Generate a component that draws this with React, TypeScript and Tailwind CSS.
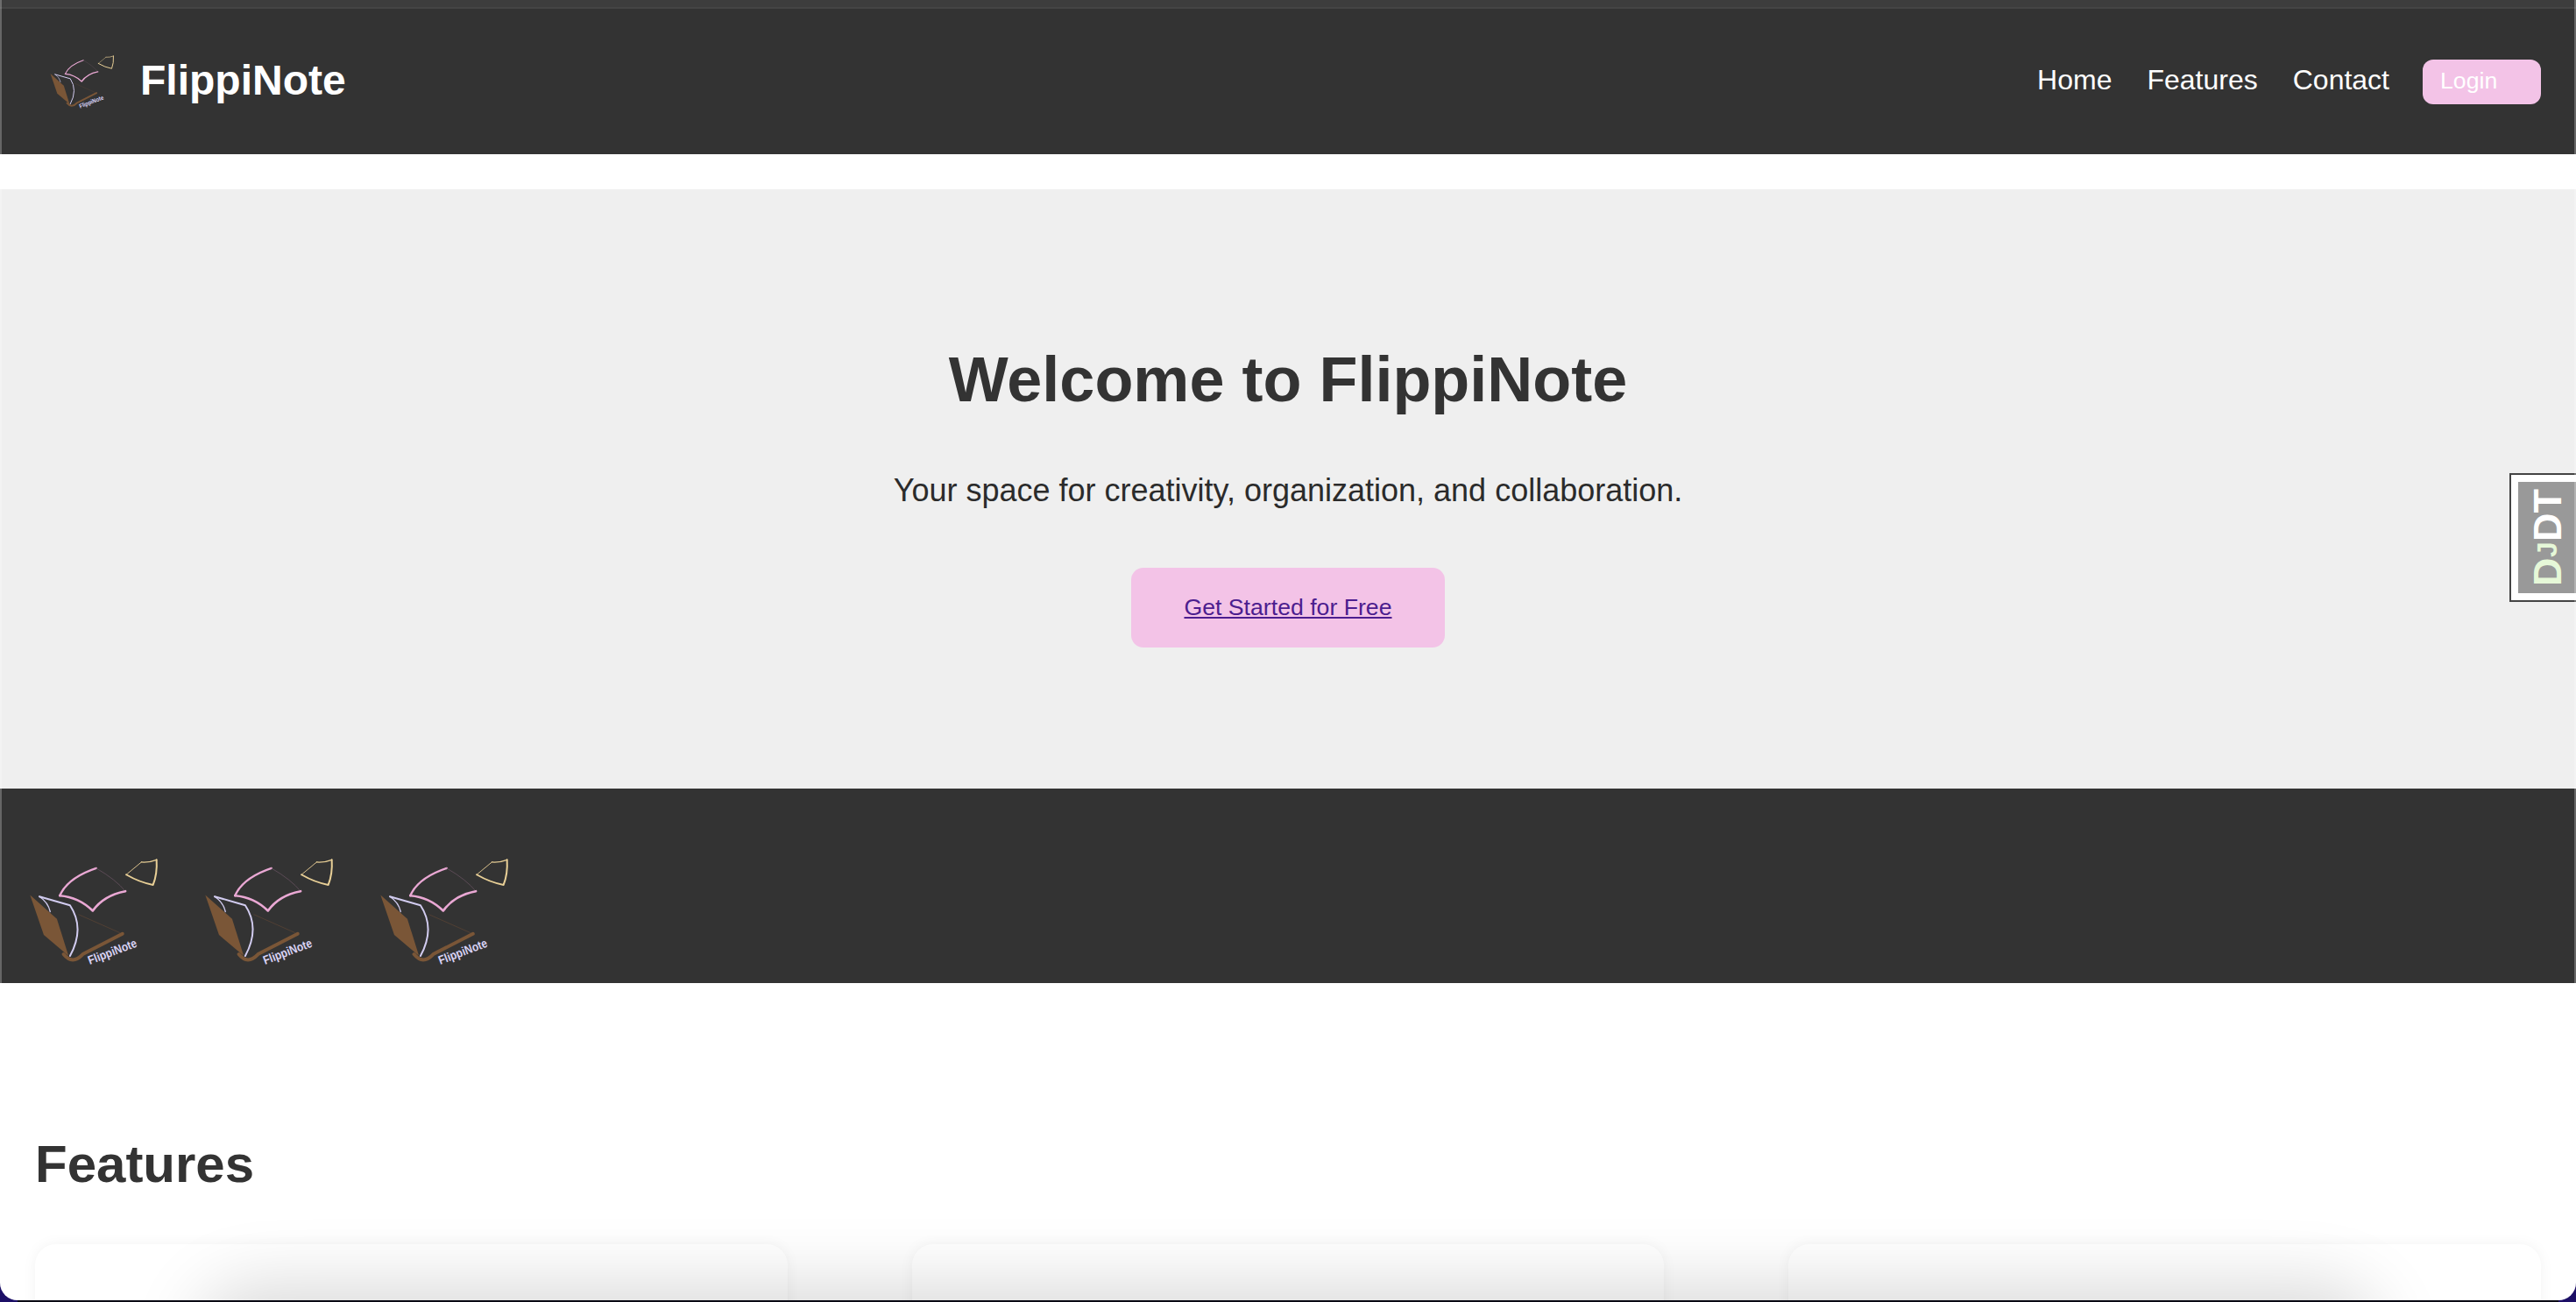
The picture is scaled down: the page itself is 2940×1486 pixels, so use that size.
import React from "react";

function Logo({ className }: { className: string }) {
  return (
    <svg viewBox="90 50 460 380" className={className} fill="none" strokeLinecap="round" strokeLinejoin="round">
      {/* book */}
      <path d="M103 183 L195 265 L235 392 L150 320 Z" fill="#7a5637" />
      <path d="M218 386 Q248 424 284 386 L420 316" stroke="#7a5637" strokeWidth="12" />
      <path d="M270 250 L410 312" stroke="#5f4634" strokeWidth="2" />
      {/* page */}
      <path d="M135 188 L240 218 Q292 296 240 392" stroke="#d2ccf0" strokeWidth="6" />
      <path d="M135 188 Q165 208 172 240" stroke="#d2ccf0" strokeWidth="4" />
      {/* pink sheet */}
      <path d="M205 185 Q232 124 330 91" stroke="#eaa8d4" strokeWidth="7" />
      <path d="M330 91 Q398 130 430 170" stroke="#6e5666" strokeWidth="2" />
      <path d="M430 170 Q356 184 318 237 Q270 190 205 185" stroke="#eaa8d4" strokeWidth="8" />
      {/* small sheet */}
      <path d="M433 113 L485 70" stroke="#d9c08c" strokeWidth="3" />
      <path d="M485 70 Q512 72 537 62" stroke="#e8cf96" strokeWidth="4" />
      <path d="M537 62 Q540 110 525 148 Q480 140 433 113" stroke="#e8cf96" strokeWidth="6" />
      <text
        x="308"
        y="422"
        transform="rotate(-21 308 422)"
        fontFamily="'Liberation Sans', sans-serif"
        fontSize="42"
        fontWeight="700"
        fill="#d8d2f4"
        textLength="176"
        lengthAdjust="spacingAndGlyphs"
      >
        FlippiNote
      </text>
    </svg>
  );
}

function App() {
  return (
    <div className="relative h-[1486px] overflow-hidden bg-[#1c0f66] font-['Liberation_Sans',Arial,sans-serif] text-[#333333]">
      <div className="relative h-[1484px] overflow-hidden rounded-b-[20px] bg-white">
        <nav className="flex h-[176px] items-center justify-between border-t-[10px] border-[#454545] bg-[#333333] pl-[55px] pr-[40px] text-white">
          <div className="flex items-center gap-[28px]">
            <Logo className="h-[63px] w-[77px]" />
            <span className="-mt-[3px] text-[48px] leading-[56px] font-bold">FlippiNote</span>
          </div>
          <div className="flex items-center gap-[40px] text-[32px] leading-[38px]">
            <a className="-mt-[4px]">Home</a>
            <a className="-mt-[4px]">Features</a>
            <a className="-mt-[4px]">Contact</a>
            <button className="-ml-[2px] h-[51px] w-[135px] rounded-[12px] bg-[#f3c3e7] pb-[2px] pl-[20px] text-left text-[26.67px] text-white">
              Login
            </button>
          </div>
        </nav>

        <section className="mt-[40px] flex h-[684px] flex-col items-center bg-[#efefef] pt-[175px]">
          <h1 className="text-[72px] leading-[84px] font-bold">Welcome to FlippiNote</h1>
          <p className="mt-[64px] text-[36px] leading-[42px] text-[#2b2b2b]">
            Your space for creativity, organization, and collaboration.
          </p>
          <a className="mt-[67px] flex h-[91px] w-[358px] items-center justify-center rounded-[14px] bg-[#f3c3e7] pb-[2px] text-[26.67px] text-[#4c1d8f] underline">
            Get Started for Free
          </a>
        </section>

        <section className="flex h-[222px] items-start gap-[47px] bg-[#333333] pl-[30px] pt-[77px]">
          <Logo className="h-[127px] w-[153px]" />
          <Logo className="h-[127px] w-[153px]" />
          <Logo className="h-[127px] w-[153px]" />
        </section>

        <section className="px-[40px] pt-[172px]">
          <h2 className="text-[60px] leading-[70px] font-bold">Features</h2>
          <div className="mt-[56px] grid grid-cols-3 gap-[142px]">
            <div className="h-[300px] rounded-[24px] bg-white shadow-[0_0_16px_rgba(0,0,0,0.05)]" />
            <div className="h-[300px] rounded-[24px] bg-white shadow-[0_0_16px_rgba(0,0,0,0.05)]" />
            <div className="h-[300px] rounded-[24px] bg-white shadow-[0_0_16px_rgba(0,0,0,0.05)]" />
          </div>
        </section>

        {/* shadow of the next panel, falls over the cards */}
        <div className="absolute top-[1490px] right-[250px] left-[250px] h-[100px] rounded-[40px] shadow-[0_0_80px_24px_rgba(0,0,0,0.15)]" />

        {/* debug toolbar handle */}
        <div className="absolute top-[540px] right-0 border-2 border-r-0 border-[#444444] bg-white py-[8px] pl-[8px]">
          <div className="flex h-[127px] w-[66px] rotate-180 items-center justify-center bg-[#999999] font-bold text-white [writing-mode:vertical-rl]">
            <span className="text-[45px] leading-none text-[#e6f8d8]">D</span>
            <span className="text-[32px] leading-none text-[#e6f8d8]">J</span>
            <span className="text-[45px] leading-none">DT</span>
          </div>
        </div>

        {/* window edge */}
        <div className="pointer-events-none absolute inset-x-0 top-0 h-[8px] bg-[#3d3d3d]" />
        <div className="pointer-events-none absolute inset-0 border-x-2 border-white/25" />
      </div>
      <div className="absolute inset-x-[20px] bottom-0 h-[2px] bg-[#0a0a14]" />
    </div>
  );
}

export default App;
